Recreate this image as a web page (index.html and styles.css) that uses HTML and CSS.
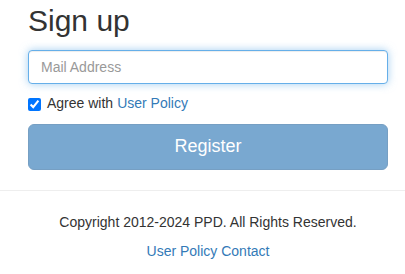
FILE: index.html
```html
<!DOCTYPE html>
<html>
  <head>
    <title>Sign up</title>
    <meta charset="UTF-8">
    <meta name="viewport" content="width=device-width, initial-scale=1.0">
    <link rel="stylesheet" href="styles.css">
  </head>
  <body>
    <div class="container">
      <h2 class="title">Sign up</h2>
      <form class="signup-form">
        <input class="form-control focused" type="email" placeholder="Mail Address">
        <label class="agree">
          <input type="checkbox" checked>
          Agree with <a href="#">User Policy</a>
        </label>
        <button class="btn-register" type="button" disabled>Register</button>
      </form>
    </div>

    <!-- footer -->
    <footer class="footer">
      <div class="container">
        <p class="copyright">Copyright 2012-2024 PPD. All Rights Reserved.</p>
        <p class="footer-links">
          <a href="#">User Policy</a> <a href="#">Contact</a>
        </p>
      </div>
    </footer>
  </body>
</html>
```

FILE: styles.css
```css
body {
    margin: 0;
    font-family: "Liberation Sans", Arial, sans-serif;
    font-size: 14px;
    line-height: 1.42857;
    color: #333;
    background-color: #fff;
}
a {
    color: #337ab7;
    text-decoration: none;
}
.container {
    width: 360px;
    margin-left: 28px;
}
.title {
    margin: 4px 0 13px;
    font-size: 30px;
    font-weight: 500;
    line-height: 1.1;
}
.signup-form {
    display: flex;
    flex-direction: column;
}
.form-control {
    box-sizing: border-box;
    width: 100%;
    height: 34px;
    padding: 6px 12px;
    font-family: inherit;
    font-size: 14px;
    color: #555;
    border: 1px solid #ccc;
    border-radius: 4px;
    outline: none;
}
.form-control::placeholder {
    color: #999;
}
.form-control.focused {
    border-color: #66afe9;
    box-shadow: inset 0 1px 1px rgba(0,0,0,.075), 0 0 8px rgba(102,175,233,.6);
}
.agree {
    display: flex;
    align-items: center;
    margin: 10px 0 10px;
    height: 20px;
}
.agree input {
    width: 13px;
    height: 13px;
    margin: 0 6px 0 0;
}
.agree a {
    margin-left: 4px;
}
.btn-register {
    box-sizing: border-box;
    width: 100%;
    height: 46px;
    padding: 10px 16px;
    font-family: inherit;
    font-size: 18px;
    line-height: 1.3333;
    color: #fff;
    background-color: #337ab7;
    border: 1px solid #2e6da4;
    border-radius: 6px;
    opacity: .65;
}
.footer {
    margin-top: 20px;
    border-top: 1px solid #eee;
    padding-top: 22px;
    text-align: center;
}
.copyright {
    margin: 0 0 9px;
}
.footer-links {
    margin: 0;
}
```
